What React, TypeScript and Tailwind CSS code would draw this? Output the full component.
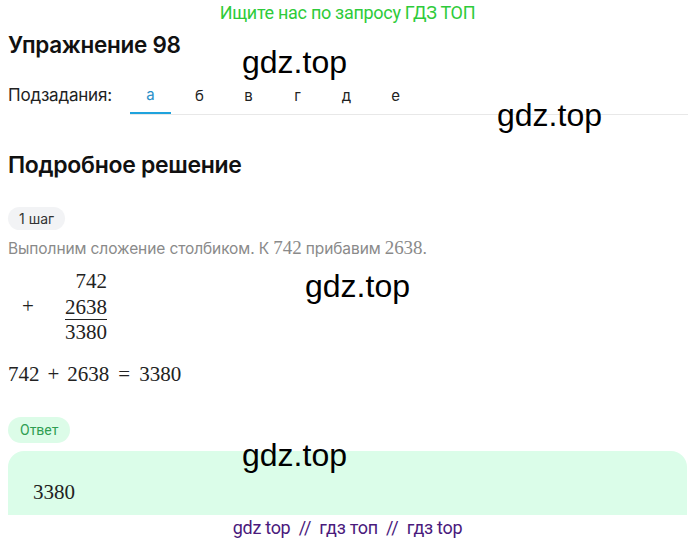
import React from "react";

const sans = { fontFamily: "Inter, 'Noto Sans', sans-serif" };

export default function App() {
  const tabs = ["а", "б", "в", "г", "д", "е"];
  return (
    <div className="relative w-[695px] h-[542px] overflow-hidden bg-white text-[#111]" style={sans}>
      <div className="h-6 flex items-center justify-center text-[18px] text-[#2ecb3a] font-['Roboto',sans-serif] tracking-[-0.3px]">
        Ищите нас по запросу ГДЗ ТОП
      </div>
      <h1 className="mt-[7px] ml-2 text-[22.5px] leading-[28px] font-semibold tracking-[-0.3px]">Упражнение 98</h1>
      <div className="mt-[18px] flex items-end h-[38px]">
        <div className="ml-2 w-[122px] self-center text-[17px] text-[#222] tracking-[-0.2px]">Подзадания:</div>
        <div className="flex-1 mr-[7px] flex gap-[8px] border-b border-[#e8e8e8] h-full">
          {tabs.map((t, i) => (
            <div
              key={t}
              className={
                i === 0
                  ? "w-[41px] h-full flex items-center justify-center text-[15px] text-[#2a8fc8] border-b-2 border-[#1fa3dd] -mb-px pt-[2px]"
                  : "w-[41px] h-full flex items-center justify-center text-[15px] text-[#222] pt-[2px]"
              }
            >
              {t}
            </div>
          ))}
        </div>
      </div>
      <h2 className="mt-[35px] ml-2 text-[23px] leading-[30px] font-semibold tracking-[-0.3px]">Подробное решение</h2>
      <div className="mt-[27px] ml-2 inline-flex items-center h-[23px] px-[11px] rounded-full bg-[#f2f3f5] text-[14px] text-[#333]">
        1 шаг
      </div>
      <p className="mt-[8px] ml-2 text-[15.5px] leading-[20px] text-[#8a8a8a] tracking-[-0.1px]">
        Выполним сложение столбиком. К{" "}
        <span className="font-['Liberation_Serif',serif] text-[19px]">742</span> прибавим{" "}
        <span className="font-['Liberation_Serif',serif] text-[19px]">2638</span>.
      </p>
      <div className="mt-[10px] ml-2 flex items-center font-['Liberation_Serif',serif] text-[21px] text-[#222]">
        <div className="w-[40px] text-center">+</div>
        <div className="w-[59px] flex flex-col items-end leading-[25.5px]">
          <div>742</div>
          <div className="border-b border-[#222] leading-[24px]">2638</div>
          <div>3380</div>
        </div>
      </div>
      <div className="mt-[16px] ml-2 font-['Liberation_Serif',serif] text-[21px] leading-[26px] text-[#222] flex">
        <span>742</span>
        <span className="mx-[8px]">+</span>
        <span>2638</span>
        <span className="mx-[9px]">=</span>
        <span>3380</span>
      </div>
      <div className="mt-[30px] ml-2 inline-flex items-center h-[26px] px-[12px] rounded-full bg-[#dcfce8] text-[14px] text-[#2f9e52] font-['Roboto',sans-serif]">
        Ответ
      </div>
      <div className="mt-[8px] mx-2 h-[64px] rounded-t-[16px] bg-[#dbfde9] pl-[25px] pt-[29px] font-['Liberation_Serif',serif] text-[21px] leading-[24px] text-[#222]">
        3380
      </div>
      <div className="h-6 flex items-center justify-center text-[18px] text-[#4a1a7c] font-['Roboto',sans-serif] tracking-[-0.3px] whitespace-pre">
        {"gdz top  //  гдз топ  //  гдз top"}
      </div>

      <div className="absolute top-[46px] left-[242px] text-[32px] leading-none text-black font-['Liberation_Sans',sans-serif]">gdz.top</div>
      <div className="absolute top-[99px] left-[497px] text-[32px] leading-none text-black font-['Liberation_Sans',sans-serif]">gdz.top</div>
      <div className="absolute top-[270px] left-[305px] text-[32px] leading-none text-black font-['Liberation_Sans',sans-serif]">gdz.top</div>
      <div className="absolute top-[439px] left-[242px] text-[32px] leading-none text-black font-['Liberation_Sans',sans-serif]">gdz.top</div>
    </div>
  );
}
